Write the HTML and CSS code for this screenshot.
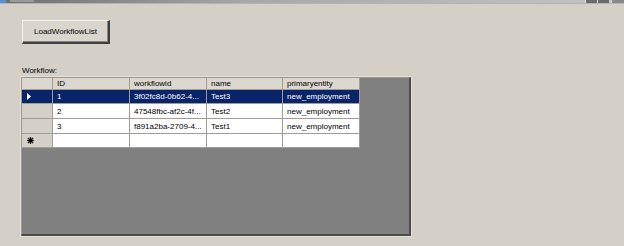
FILE: index.html
```
<!DOCTYPE html>
<html>
<head>
<meta charset="utf-8">
<link rel="stylesheet" href="styles.css">
</head>
<body>
<div class="titlebar">
  <span class="app-icon"></span>
  <span class="title-text"></span>
  <span class="spacer"></span>
  <span class="tb-btn"></span><span class="tb-btn"></span><span class="tb-btn close"></span>
</div>
<div class="form">
  <button class="btn">LoadWorkflowList</button>
  <div class="label">Workflow:</div>
  <div class="gridview">
    <div class="grid">
      <div class="hdr corner"></div>
      <div class="hdr">ID</div>
      <div class="hdr">workflowid</div>
      <div class="hdr">name</div>
      <div class="hdr">primaryentity</div>

      <div class="rh sel"><svg width="4" height="7" viewBox="0 0 4 7"><polygon points="0,0 4,3.5 0,7" fill="#fff"/></svg></div>
      <div class="cell sel">1</div>
      <div class="cell sel">3f02fc8d-0b62-4...</div>
      <div class="cell sel">Test3</div>
      <div class="cell sel">new_employment</div>

      <div class="rh"></div>
      <div class="cell">2</div>
      <div class="cell">47548fbc-af2c-4f...</div>
      <div class="cell">Test2</div>
      <div class="cell">new_employment</div>

      <div class="rh"></div>
      <div class="cell">3</div>
      <div class="cell">f891a2ba-2709-4...</div>
      <div class="cell">Test1</div>
      <div class="cell">new_employment</div>

      <div class="rh"><svg width="7" height="7" viewBox="0 0 7 7"><g stroke="#000" stroke-width="1.2"><line x1="3.5" y1="0" x2="3.5" y2="7"/><line x1="0" y1="3.5" x2="7" y2="3.5"/><line x1="1" y1="1" x2="6" y2="6"/><line x1="6" y1="1" x2="1" y2="6"/></g></svg></div>
      <div class="cell"></div>
      <div class="cell"></div>
      <div class="cell"></div>
      <div class="cell"></div>
    </div>
  </div>
</div>
</body>
</html>
```
FILE: styles.css
```
html, body {
  margin: 0;
  padding: 0;
}
body {
  width: 624px;
  height: 246px;
  background: #d4d0c8;
  font-family: "Liberation Sans", Arial, sans-serif;
  font-size: 8px;
  color: #000;
  overflow: hidden;
}
.titlebar {
  height: 3px;
  display: flex;
  align-items: flex-start;
  background: linear-gradient(to right, #6f6f6f, #a8a8a8 40%, #c4c4c4);
  border-bottom: 1px solid #b8b4ac;
}
.app-icon {
  width: 6px;
  height: 3px;
  background: #5b8ad8;
}
.title-text {
  margin-left: 4px;
  width: 24px;
  height: 2px;
  background: #9a9a9a;
}
.spacer { flex: 1; }
.tb-btn {
  width: 11px;
  height: 3px;
  background: #6a6a6a;
  border-left: 1px solid #e0e0e0;
}
.tb-btn.close { width: 12px; margin-left: 2px; background: #8a8a8a; }
.form {
  padding-left: 21px;
  display: flex;
  flex-direction: column;
  align-items: flex-start;
}
.btn {
  margin-top: 16px;
  margin-left: 1px;
  width: 88px;
  height: 24px;
  padding: 0;
  font-family: "Liberation Sans", Arial, sans-serif;
  font-size: 8px;
  color: #000;
  background: #dad6ce;
  border-style: solid;
  border-width: 1px 2px 2px 1px;
  border-color: #f4f2ee #404040 #404040 #f4f2ee;
  box-shadow: inset -1px -1px 0 #8a8780;
}
.label {
  margin-top: 22px;
  margin-left: 1px;
  line-height: 10px;
  height: 10px;
}
.gridview {
  margin-top: 1px;
  width: 387px;
  height: 156px;
  background: #808080;
  border-style: solid;
  border-width: 1px 2px 2px 1px;
  border-color: #9c9890 #4c4c4c #4c4c4c #9c9890;
  box-shadow: 0 0 0 1px #e4e0d8;
}
.grid {
  display: inline-grid;
  grid-template-columns: 30px 76px 76px 75px 76px;
  grid-template-rows: 11px 13px 14px 14px 13px;
  gap: 1px;
  padding: 0 1px 1px 0;
  background: #a09c96;
}
.hdr {
  background: #dcd8d0;
  padding-left: 4px;
  line-height: 11px;
  white-space: nowrap;
  overflow: hidden;
}
.hdr.corner { padding: 0; }
.rh {
  background: #d4d0c8;
  display: flex;
  align-items: center;
  padding-left: 5px;
}
.cell {
  background: #fff;
  padding-left: 4px;
  display: flex;
  align-items: center;
  white-space: nowrap;
  overflow: hidden;
}
.sel {
  background: #0a246a;
  color: #fff;
}
```
